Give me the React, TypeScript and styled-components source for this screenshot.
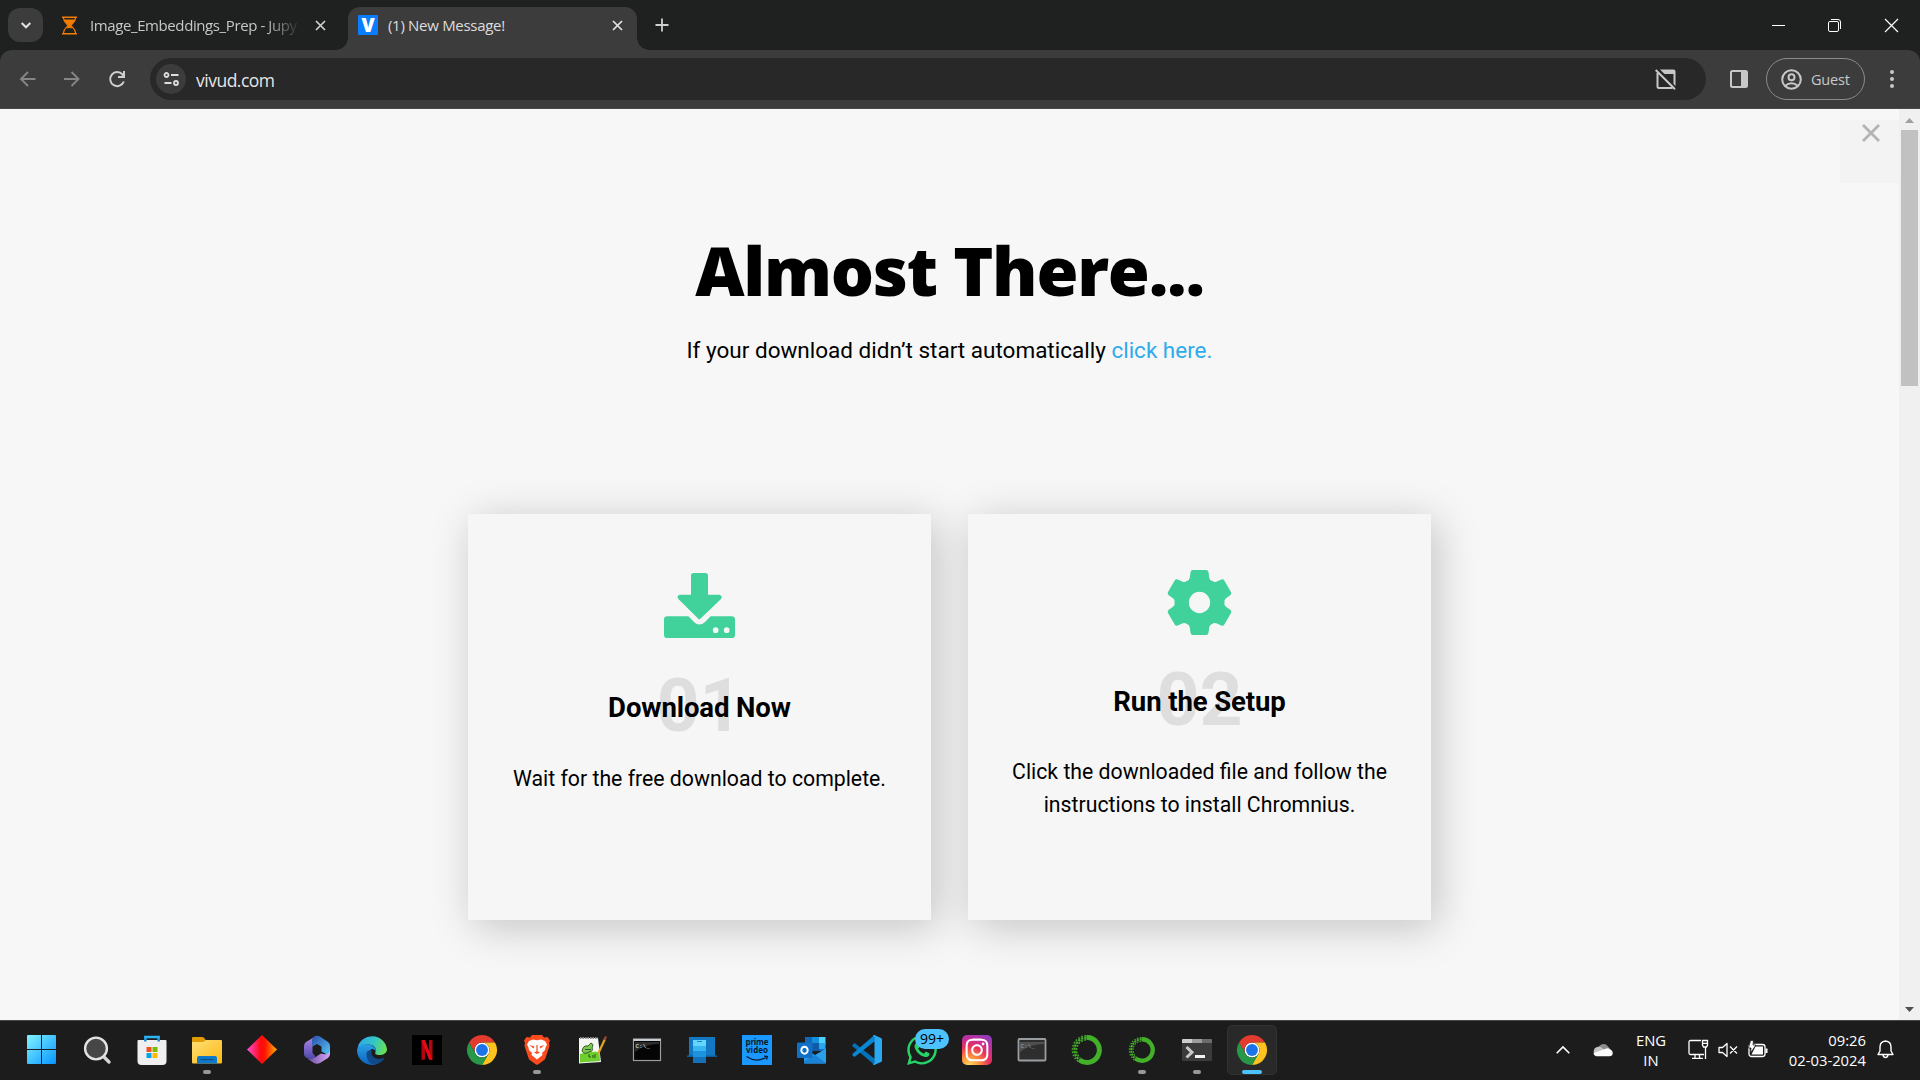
import React from "react";
import styled, { createGlobalStyle } from "styled-components";
import { FaInstagram, FaWhatsapp } from "react-icons/fa";

const UI_FONT = `"Open Sans", "Noto Sans", sans-serif`;
const PAGE_FONT = `Roboto, "Liberation Sans", sans-serif`;

const GlobalStyle = createGlobalStyle`
  *, *::before, *::after { box-sizing: border-box; }
  body { margin: 0; background: #f7f7f7; overflow: hidden; }
  h1, h2, p { margin: 0; }
  svg { display: block; flex: none; overflow: visible; }
`;

const Screen = styled.div`
  width: 1920px;
  height: 1080px;
  display: flex;
  flex-direction: column;
  overflow: hidden;
  font-family: ${UI_FONT};
`;

/* ---------- tab strip ---------- */

const TabStrip = styled.div`
  height: 50px;
  flex: none;
  display: flex;
  align-items: flex-end;
  background: #1f2120;
  color: #dcdcdc;
`;

const TabSearch = styled.div`
  width: 35px;
  height: 34px;
  margin: 0 0 8px 8px;
  border-radius: 12px;
  background: #3c3c3c;
  display: grid;
  place-items: center;
`;

const Tab = styled.div<{ $active?: boolean; $width: number; $left: number; $right: number }>`
  position: relative;
  width: ${(p) => p.$width}px;
  height: ${(p) => (p.$active ? 43 : 50)}px;
  padding: ${(p) => (p.$active ? 0 : 7)}px ${(p) => p.$right}px 7px ${(p) => p.$left}px;
  display: flex;
  align-items: center;
  background: ${(p) => (p.$active ? "#3c3c3c" : "transparent")};
  border-radius: 12px 12px 0 0;
  ${(p) =>
    p.$active &&
    `&::before, &::after {
      content: "";
      position: absolute;
      bottom: 0;
      width: 12px;
      height: 12px;
    }
    &::before {
      left: -12px;
      background: radial-gradient(circle at 0 0, transparent 11.5px, #3c3c3c 12px);
    }
    &::after {
      right: -12px;
      background: radial-gradient(circle at 100% 0, transparent 11.5px, #3c3c3c 12px);
    }`}
`;

const TabTitle = styled.span<{ $fade?: boolean; $gap: number; $track: number }>`
  flex: 1;
  margin-left: ${(p) => p.$gap}px;
  padding-top: 1px;
  font-size: 15px;
  line-height: 21px;
  letter-spacing: ${(p) => p.$track}px;
  white-space: nowrap;
  overflow: hidden;
  ${(p) =>
    p.$fade &&
    `color: #c7c7c7;
     -webkit-mask-image: linear-gradient(90deg, #000 175px, transparent 211px);`}
`;

const TabClose = styled.div<{ $gap: number }>`
  width: 14px;
  margin-left: ${(p) => p.$gap}px;
  display: grid;
  place-items: center;
`;

const NewTab = styled.div`
  width: 14px;
  margin: 0 0 18px 18px;
`;

const WindowControls = styled.div`
  height: 50px;
  margin-left: auto;
  padding-right: 21px;
  display: flex;
  align-items: center;
  gap: 43px;
`;

/* ---------- toolbar ---------- */

const ToolbarBack = styled.div`
  height: 59px;
  flex: none;
  background: #1f2120;
`;

const Toolbar = styled.div`
  height: 59px;
  border-radius: 12px 12px 0 0;
  border-bottom: 1px solid #4a4848;
  background: #3c3c3c;
  display: flex;
  align-items: center;
  padding: 0 20px;
`;

const NavButtons = styled.div`
  display: flex;
  align-items: center;
  gap: 28px;
  width: 130px;
  flex: none;
`;

const Omnibox = styled.div`
  width: 1556px;
  height: 42px;
  flex: none;
  border-radius: 21px;
  background: #282828;
  display: flex;
  align-items: center;
  padding: 0 30px 0 6px;
`;

const SiteInfo = styled.div`
  width: 30px;
  height: 30px;
  border-radius: 50%;
  background: #3c3c3c;
  display: grid;
  place-items: center;
`;

const Address = styled.span`
  flex: 1;
  margin-left: 10px;
  padding-top: 2px;
  font-size: 17.5px;
  line-height: 24px;
  letter-spacing: -0.5px;
  color: #e6e6e6;
`;

const PanelIcon = styled.div`
  margin-left: 24px;
`;

const Profile = styled.div`
  width: 99px;
  height: 42px;
  margin-left: 18px;
  flex: none;
  border: 1px solid #8b8b8b;
  border-radius: 21px;
  display: flex;
  align-items: center;
  gap: 9px;
  padding-left: 14px;
  font-size: 14.5px;
  letter-spacing: -0.2px;
  color: #c9c9c9;
`;

const MenuDots = styled.div`
  margin-left: 25px;
`;

/* ---------- page ---------- */

const Viewport = styled.main`
  height: 911px;
  flex: none;
  display: flex;
  background: #f7f7f7;
`;

const Page = styled.div`
  position: relative;
  width: 1899px;
  height: 911px;
  overflow: hidden;
  font-family: ${PAGE_FONT};
  color: #000;
  display: flex;
  flex-direction: column;
  align-items: center;
`;

const Dismiss = styled.div`
  position: absolute;
  top: 11px;
  right: 0;
  width: 59px;
  height: 63px;
  padding: 4px 0 0 22px;
  background: #f3f3f3;
`;

const Heading = styled.h1`
  margin-top: 116px;
  font-family: "Open Sans", "Noto Sans", sans-serif;
  font-weight: 800;
  font-size: 68px;
  line-height: 90px;
  letter-spacing: -1.25px;
  white-space: nowrap;
`;

const Lead = styled.p`
  margin-top: 18px;
  font-size: 22.5px;
  line-height: 34px;
  white-space: nowrap;
`;

const Link = styled.a`
  color: #2faaea;
`;

const Steps = styled.section`
  isolation: isolate;
  margin-top: 147px;
  display: flex;
  gap: 37px;
`;

const Card = styled.article<{ $top: number }>`
  position: relative;
  width: 463px;
  height: 406px;
  padding-top: ${(p) => p.$top}px;
  background: #f6f6f6;
  display: flex;
  flex-direction: column;
  align-items: center;
  text-align: center;
  &::before {
    content: "";
    position: absolute;
    inset: 0;
    z-index: -1;
    box-shadow: 6px 7px 40px rgba(0, 0, 0, 0.21);
  }
`;

const CardTitle = styled.h2<{ $gap: number }>`
  position: relative;
  z-index: 0;
  margin-top: ${(p) => p.$gap}px;
  font-size: 27.5px;
  font-weight: 700;
  line-height: 34px;
  letter-spacing: -0.1px;
  white-space: nowrap;
`;

const StepNumber = styled.span`
  position: absolute;
  z-index: -1;
  left: 50%;
  top: -23px;
  transform: translateX(-50%);
  font-size: 75px;
  font-weight: 700;
  line-height: 75px;
  letter-spacing: 0;
  color: #dedede;
`;

const CardText = styled.p<{ $gap: number }>`
  margin-top: ${(p) => p.$gap}px;
  width: 400px;
  font-size: 21.25px;
  line-height: 33px;
`;

const ScrollBar = styled.div`
  width: 21px;
  background: #f0f0f0;
  display: flex;
  flex-direction: column;
  align-items: center;
  padding: 9px 0 8px;
`;

const Thumb = styled.div`
  width: 17px;
  height: 256px;
  margin-top: 7px;
  background: #c1c1c1;
`;

const DownArrow = styled.div`
  margin-top: auto;
`;

/* ---------- taskbar ---------- */

const Taskbar = styled.footer`
  height: 60px;
  flex: none;
  border-top: 1px solid #454745;
  background: #1c1c1c;
  color: #fff;
  display: flex;
  padding: 0 0 2px 14px;
`;

const AppCell = styled.div`
  position: relative;
  width: 55px;
  height: 57px;
  display: grid;
  place-items: center;
  &:first-child {
    width: 54px;
    margin-right: 1px;
  }
`;

const AppPlate = styled.div<{ $active?: boolean }>`
  width: 50px;
  height: 50px;
  border-radius: 5px;
  border: 1px solid ${(p) => (p.$active ? "#313131" : "transparent")};
  background: ${(p) => (p.$active ? "#292929" : "transparent")};
  display: grid;
  place-items: center;
`;

const Indicator = styled.i<{ $active?: boolean }>`
  position: absolute;
  bottom: 4px;
  left: 50%;
  width: ${(p) => (p.$active ? 20 : 8)}px;
  height: 4px;
  transform: translateX(-50%);
  border-radius: 2px;
  background: ${(p) => (p.$active ? "#4cc2ff" : "#989898")};
`;

const Badge = styled.span`
  position: absolute;
  left: 21px;
  top: 8px;
  width: 34px;
  height: 20px;
  border-radius: 10px;
  background: #4cc2ff;
  color: #000;
  font-size: 14px;
  line-height: 20px;
  text-align: center;
`;

const InstagramTile = styled.div`
  width: 30px;
  height: 30px;
  border-radius: 5px;
  display: grid;
  place-items: center;
  color: #fff;
  background: radial-gradient(circle at 25% 105%, #ffd35a 5%, #fc8b3c 28%, #e8325d 52%, #c32e9b 72%, #6a45d0 105%);
`;

const Tray = styled.div`
  margin-left: auto;
  display: flex;
  align-items: center;
  padding-right: 26px;
`;

const TraySlot = styled.div<{ $left?: number }>`
  margin-left: ${(p) => p.$left ?? 0}px;
`;

const TrayText = styled.div<{ $width: number; $align: string; $left: number }>`
  width: ${(p) => p.$width}px;
  margin-left: ${(p) => p.$left}px;
  padding-top: 1px;
  font-size: 14.8px;
  line-height: 20px;
  text-align: ${(p) => p.$align};
  white-space: nowrap;
`;

/* ---------- drawings ---------- */

const Cross = ({ size, width, color }: { size: number; width: number; color: string }) => (
  <svg width={size} height={size} viewBox={`0 0 ${size} ${size}`} stroke={color} strokeWidth={width}>
    <path d={`M1 1L${size - 1} ${size - 1}M${size - 1} 1L1 ${size - 1}`} />
  </svg>
);

const Hourglass = () => (
  <svg width="17" height="19" viewBox="0 0 17 19" fill="#f57c00">
    <path d="M1 .5H16V2H1ZM1 17H16V18.500H1Z" />
    <path d="M2.500 2C2.500 6 5.500 7.500 7.200 9.500C5.500 11.500 2.500 13 2.500 17M14.500 2C14.500 6 11.500 7.500 9.800 9.500C11.500 11.500 14.500 13 14.500 17" fill="none" stroke="#f57c00" strokeWidth="1.200" />
    <path d="M3 3.500H14C13.500 7 10.500 7.500 9.500 9.500C10 11 11 11.500 11.500 12.500Q8.500 11.500 5.500 12.500C6 11.500 7 11 7.500 9.500C6.500 7.500 3.500 7 3 3.500Z" />
  </svg>
);

const VFavicon = () => (
  <svg width="20" height="20" viewBox="0 0 20 20">
    <rect width="20" height="20" rx="1" fill="#0a7cff" />
    <text x="10" y="16.800" textAnchor="middle" fontFamily="Open Sans, sans-serif" fontWeight="800" fontSize="19" fill="#fff">V</text>
  </svg>
);

const Arrow = ({ back }: { back?: boolean }) => (
  <svg width="16" height="16" viewBox="0 0 16 16" fill="none" stroke="#858585" strokeWidth="1.900">
    {back ? <path d="M15.500 8H1M8 1L1 8L8 15" /> : <path d="M0 8H14.500M7.500 1L14.500 8L7.500 15" />}
  </svg>
);

const Reload = () => (
  <svg width="18" height="18" viewBox="0 0 18 18" fill="none" stroke="#cfcfcf" strokeWidth="2">
    <path d="M15.800 11.500A7 7 0 1 1 14.500 4.500L16 6.300" />
    <path d="M16 1V7H10" />
  </svg>
);

const Tune = () => (
  <svg width="16" height="14" viewBox="0 0 16 14" fill="none" stroke="#dedede" strokeWidth="1.800">
    <circle cx="3.500" cy="3" r="2" />
    <path d="M8 3H15.500M1.500 11H8.500" />
    <circle cx="13" cy="11" r="2" />
  </svg>
);

const PopupBlocked = () => (
  <svg width="21" height="21" viewBox="0 0 21 21" fill="none" stroke="#c8c8c8" strokeWidth="2">
    <path d="M5 .500H18.500Q20.500 .500 20.500 2.500V17L18.500 15V5H9.500Z" fill="#c8c8c8" stroke="none" />
    <path d="M2.500 4V17.500Q2.500 19 4 19H17.500M.700 1L20 20.300" />
  </svg>
);

const SidePanel = () => (
  <svg width="18" height="18" viewBox="0 0 18 18">
    <rect x="1" y="1" width="16" height="16" rx="1.500" fill="none" stroke="#c8c8c8" strokeWidth="2" />
    <path d="M11 1H17V17H11Z" fill="#c8c8c8" />
  </svg>
);

const Avatar = () => (
  <svg width="21" height="21" viewBox="0 0 21 21" fill="none" stroke="#c8c8c8" strokeWidth="2">
    <circle cx="10.500" cy="10.500" r="9.300" />
    <circle cx="10.500" cy="8.200" r="3" />
    <path d="M4 17Q10.500 11.500 17 17" />
  </svg>
);

const DownloadDrive = () => (
  <svg width="71" height="65" viewBox="0 0 213 195" fill="#41d19b">
    <path d="M89 0H124Q132 0 132 8V65H166Q177 68 171 78L109 137Q106 140 103 137L43 78Q37 68 47 65H81V8Q81 0 89 0Z" />
    <path fillRule="evenodd" d="M10 130H73L90 147Q106 162 123 147L140 130H203Q213 130 213 140V185Q213 195 203 195H10Q0 195 0 185V140Q0 130 10 130ZM155 163A8.500 8.500 0 1 0 155 180A8.500 8.500 0 1 0 155 163ZM188 163A8.500 8.500 0 1 0 188 180A8.500 8.500 0 1 0 188 163Z" />
  </svg>
);

const Gear = () => (
  <svg width="65" height="65" viewBox="-97.500 -97.500 195 195" fill="#41d19b">
    <circle r="53" fill="none" stroke="#41d19b" strokeWidth="42" />
    {[0, 60, 120, 180, 240, 300].map((a) => (
      <path key={a} transform={`rotate(${a})`} d="M-20 -97.500H20Q26 -97.500 27 -91L29 -75Q30 -67 38 -64L28 -45H-28L-38 -64Q-30 -67 -29 -75L-27 -91Q-26 -97.500 -20 -97.500Z" />
    ))}
  </svg>
);

const WindowsLogo = () => (
  <svg width="29" height="29" viewBox="0 0 29 29">
    <defs>
      <linearGradient id="win" x1="0" y1="0" x2="29" y2="29" gradientUnits="userSpaceOnUse">
        <stop stopColor="#81f3ff" />
        <stop offset="1" stopColor="#0695ff" />
      </linearGradient>
    </defs>
    <path fill="url(#win)" d="M0 1Q0 0 1 0H14V14H0ZM15 0H28Q29 0 29 1V14H15ZM0 15H14V29H1Q0 29 0 28ZM15 15H29V28Q29 29 28 29H15Z" />
  </svg>
);

const SearchIcon = () => (
  <svg width="30" height="30" viewBox="0 0 30 30" fill="none" stroke="#e3e3e3">
    <path d="M20.500 20.500L27 27" strokeWidth="3.400" strokeLinecap="round" stroke="#d2d4d6" />
    <circle cx="14" cy="13.500" r="10.900" strokeWidth="2.400" fill="#464646" />
  </svg>
);

const StoreIcon = () => (
  <svg width="30" height="30" viewBox="0 0 30 30">
    <path d="M8.300 6.500V2H21.700V6.500" fill="none" stroke="#2db4f2" strokeWidth="2.400" />
    <path d="M.500 6Q.500 5 1.500 5H28.500Q29.500 5 29.500 6V26Q29.500 30 25.500 30H4.500Q.500 30 .500 26Z" fill="#efefef" />
    <path d="M8.300 3.500V6.500M21.700 3.500V6.500" stroke="#1788cf" strokeWidth="2.400" />
    <path d="M9.500 12H14.500V17H9.500Z" fill="#f25022" />
    <path d="M15.500 12H20.500V17H15.500Z" fill="#7fba00" />
    <path d="M9.500 18H14.500V23H9.500Z" fill="#00a4ef" />
    <path d="M15.500 18H20.500V23H15.500Z" fill="#ffb900" />
  </svg>
);

const FolderIcon = () => (
  <svg width="30" height="30" viewBox="0 0 30 30">
    <defs>
      <linearGradient id="fold" x1="0" y1="0" x2="1" y2="1">
        <stop stopColor="#ffdf76" />
        <stop offset="1" stopColor="#fdb813" />
      </linearGradient>
    </defs>
    <path d="M0 3Q0 2 1 2H10Q12 2 13 4L14 6H29Q30 6 30 7V12H0Z" fill="#e09c05" />
    <path d="M0 7H11L14 5H29Q30 5 30 6V27Q30 28.500 29 28.500H1Q0 28.500 0 27Z" fill="url(#fold)" />
    <path d="M5 28.500V23Q5 21 7 21H23Q25 21 25 23V28.500Z" fill="#0f78c8" />
    <path d="M8.500 24.500H21.500" stroke="#0b4f8c" strokeWidth="1.200" />
  </svg>
);

const DiamondIcon = () => (
  <svg width="30" height="30" viewBox="0 0 30 30">
    <defs>
      <linearGradient id="dia">
        <stop stopColor="#ff4fd8" />
        <stop offset=".45" stopColor="#ff0a12" />
        <stop offset=".6" stopColor="#ff1500" />
        <stop offset="1" stopColor="#ffb000" />
      </linearGradient>
    </defs>
    <path d="M15 0L30 14.500L15 29L0 14.500Z" fill="url(#dia)" />
  </svg>
);

const M365Icon = () => (
  <svg width="30" height="30" viewBox="0 0 30 30">
    <defs>
      <linearGradient id="m1" x1="0" y1="0" x2="0" y2="1">
        <stop stopColor="#b08be8" />
        <stop offset="1" stopColor="#4a43a8" />
      </linearGradient>
      <linearGradient id="m2" x1="0" y1="0" x2="1" y2="1">
        <stop stopColor="#2a4fa8" />
        <stop offset="1" stopColor="#56c6fb" />
      </linearGradient>
      <linearGradient id="m3">
        <stop stopColor="#6b4d9e" />
        <stop offset="1" stopColor="#d7a6f5" />
      </linearGradient>
    </defs>
    <path d="M14 1L4 7Q2 8.500 2 11V19Q2 21.500 4 22.500L9 25Q13 25 13 21L10.500 18V11.500L14 9Z" fill="url(#m1)" />
    <path d="M12 1.500Q15 0 18 1.500L26 7Q28 8.500 28 11V18Q28 21 25 19.500L19.500 16.500V11.500L15 9L10 11.500V5Q10 3 12 1.500Z" fill="url(#m2)" />
    <path d="M28 16V19Q28 21.500 26 23L18 28Q15 29.500 12 28L5 23.500Q9 25 12 23L19 18.500Q26 21 28 16Z" fill="url(#m3)" />
  </svg>
);

const EdgeIcon = () => (
  <svg width="30" height="30" viewBox="0 0 30 30">
    <defs>
      <linearGradient id="e1" x1="0" y1=".3" x2="1" y2=".5">
        <stop stopColor="#2fa8e8" />
        <stop offset=".55" stopColor="#32c7c4" />
        <stop offset="1" stopColor="#6be052" />
      </linearGradient>
      <linearGradient id="e2" x1="0" y1="0" x2="0" y2="1">
        <stop stopColor="#2aa0e6" />
        <stop offset="1" stopColor="#0c63bd" />
      </linearGradient>
    </defs>
    <path d="M.500 13A15 15 0 0 1 30 14C30 18 26.500 20 22.500 20C19 20 17.500 18.800 18.500 17C20 13 16 9.500 11.500 9.500C6 9.500 2 11.500 .500 13Z" fill="url(#e1)" />
    <path d="M0 15C1 10 6 8.500 11 9.500C16 10 19.500 13 18.500 17C17 12 12 14 12 19C12 24 17 28 22 27.500C19 29.500 17 30 15 30A15 15 0 0 1 0 15Z" fill="url(#e2)" />
    <path d="M9.500 18C9 24 13 30 18 29.700C22.500 28.500 26 26 28 22.500C23 25 18 24 15.500 21C14 19 14 17 15 15.500C12 15 10 16 9.500 18Z" fill="#114a8b" />
  </svg>
);

const NetflixIcon = () => (
  <svg width="30" height="30" viewBox="0 0 30 30">
    <rect width="30" height="30" fill="#000" />
    <path d="M9.500 5H13V24.500L9.500 25Z M17 5H20.500V25L17 24.500Z" fill="#b1060f" />
    <path d="M9.500 5H13L20.500 25L17 24.500Z" fill="#e50914" />
  </svg>
);

const ChromeIcon = () => (
  <svg width="30" height="30" viewBox="0 0 48 48">
    <circle cx="24" cy="24" r="12" fill="#fff" />
    <path fill="#e33b2e" d="M24 12H44.781a23.994 23.994 0 0 0-41.564.003L13.608 30l.009-.002A11.985 11.985 0 0 1 24 12Z" />
    <circle cx="24" cy="24" r="9.500" fill="#1a73e8" />
    <path fill="#fcc31e" d="M34.391 30.003 24.001 48A23.994 23.994 0 0 0 44.780 12.003H23.999l-.003.009A11.985 11.985 0 0 1 34.391 30.003Z" />
    <path fill="#279847" d="M13.609 30.003 3.218 12.006A23.994 23.994 0 0 0 24.003 48L34.393 30.003l-.007-.007a11.985 11.985 0 0 1-20.778.007Z" />
  </svg>
);

const BraveIcon = () => (
  <svg width="26" height="30" viewBox="0 0 26 30">
    <path d="M8 0H18L20 2.500L23.500 2L26 5.500L25 8L25.500 11L21.500 23Q21 24.500 19.500 25.500L14 29.500Q13 30 12 29.500L6.500 25.500Q5 24.500 4.500 23L.500 11L1 8L0 5.500L2.500 2L6 2.500Z" fill="#fb4b1e" />
    <path d="M9 4.500L13 5.300L17 4.500L21 6L23 9.500L21.500 12.500L21 15L18 18L18.500 20L13 24.500L7.500 20L8 18L5 15L4.500 12.500L3 9.500L5 6Z" fill="#fff" />
    <path d="M5.500 10L10.500 11.500L9.500 13.500ZM20.500 10L15.500 11.500L16.500 13.500ZM10 17.500L13 16L16 17.500L13 19Z M12.400 10H13.600V17H12.400Z" fill="#fb4b1e" />
  </svg>
);

const NotepadIcon = () => (
  <svg width="30" height="30" viewBox="0 0 30 30">
    <path d="M2 3H21L24 27L2 28.500Z" fill="#f4f6f2" />
    <path d="M3 19Q12 16 22.500 17L23 26L3 27.500Z" fill="#6fcf2f" />
    <path d="M3 3H21" stroke="#8b8b8b" strokeWidth="2" strokeDasharray="1.500 1" />
    <path d="M5 16Q6 10 11 11L14 8Q17 9 15 13Q17 16 12 17Q7 20 5 16ZM8 14.500H14" fill="#7cc94f" stroke="#284d1b" strokeWidth=".9" />
    <path d="M12 19V22H14M16 20V23M18 19V23" stroke="#1d4a12" strokeWidth=".9" fill="none" />
    <path d="M21 19L28 4" stroke="#e3a51f" strokeWidth="2.200" />
    <path d="M27.400 5L29 1.500" stroke="#a5462c" strokeWidth="2.200" />
  </svg>
);

const CmdIcon = ({ boxed }: { boxed?: boolean }) => (
  <svg width="30" height="30" viewBox="0 0 30 30">
    <rect x="1.500" y="4" width="27" height="21.500" rx={boxed ? 1 : 0} fill={boxed ? "#2e2e2e" : "#050505"} stroke="#9a9da0" strokeWidth={boxed ? 1.8 : 1.2} />
    {!boxed && <path d="M1.500 4H28.500V6H1.500Z" fill="#c9ccd0" />}
    <path d="M3 7H27V9Q13 9 3 17Z" fill="#ffffff" opacity=".16" />
    <text x="3.500" y="12.500" fontFamily="Liberation Mono, monospace" fontSize="6" fill={boxed ? "#a6a6a6" : "#e8e8e8"}>{"C:\\_"}</text>
  </svg>
);

const PhoneLinkIcon = () => (
  <svg width="30" height="30" viewBox="0 0 30 30">
    <path d="M2 2H28V20L30 22H0L2 20Z" fill="#1378c4" />
    <path d="M0 20.500H30V22H0Z" fill="#0e5b9c" />
    <path d="M6 5H19V28H6Z" fill="#1470b9" />
    <path d="M6 5H19V11H6Z" fill="#62d7fb" />
    <path d="M6 11H19V16H6Z" fill="#38b6f0" />
    <path d="M6 16H19V22H6Z" fill="#1d93dd" />
    <path d="M10 6.500H15" stroke="#1573ad" strokeWidth=".8" />
  </svg>
);

const PrimeIcon = () => (
  <svg width="30" height="30" viewBox="0 0 30 30" fontFamily="Open Sans, sans-serif" fontWeight="700" fontSize="8">
    <rect width="30" height="30" fill="#1a98ff" />
    <text x="3.500" y="9.500" textLength="23" fill="#06182b">prime</text>
    <text x="4" y="18.300" textLength="22" fill="#06182b">video</text>
    <path d="M4.500 21.500Q14 28 24 22.500M22 21.200L25.500 21.500L24.500 24.500" fill="none" stroke="#06182b" strokeWidth="1.200" />
  </svg>
);

const OutlookIcon = () => (
  <svg width="30" height="30" viewBox="0 0 30 30">
    <path d="M8 2H28V16H8Z" fill="#1567b8" />
    <path d="M15 2H22V12H15Z" fill="#1490df" />
    <path d="M22 2H28.500V10H22Z" fill="#4fd0fb" />
    <path d="M15 8H22V16H15Z" fill="#0f5ba5" />
    <path d="M22 8H28.500V14H22Z" fill="#2aa7ee" />
    <path d="M7 14L18 20L29 13.500V27.500Q29 28.500 28 28.500H8Q7 28.500 7 27.500Z" fill="#2a9fea" />
    <path d="M18 20L29 28Q28.500 28.500 28 28.500H8Q7 28.500 7 27.500V26Z" fill="#1a83d6" />
    <rect x="0" y="7.500" width="15.500" height="15.500" rx="1" fill="#0f70c5" />
    <ellipse cx="7.500" cy="15.200" rx="3.200" ry="3.500" fill="none" stroke="#fff" strokeWidth="1.900" />
  </svg>
);

const CodeIcon = () => (
  <svg width="30" height="30" viewBox="0 0 30 30">
    <path d="M1.800 8.500Q2.500 8 3.200 8.500L23 24L22.500 30L.600 11.200Q0 10.500 .600 9.800Z" fill="#0072ba" />
    <path d="M1.800 21.500Q2.500 22 3.200 21.500L23 6L22.500 0L.600 18.800Q0 19.500 .600 20.200Z" fill="#0a87d2" />
    <path d="M22.300 0L29 3Q30 3.500 30 4.500V25.500Q30 26.500 29 27L22.300 30Q21 30 21 29L22.500 28V2L21 1Q21 0 22.300 0Z" fill="#2aa8f2" />
  </svg>
);

const AnacondaIcon = ({ size }: { size: number }) => (
  <svg width={size} height={size} viewBox="0 0 30 30" fill="none" stroke="#43b02a">
    <path d="M14.500 2.600A12.400 12.400 0 1 1 7.500 24.900" strokeWidth="5" />
    <path d="M14.500 2.600A12.400 12.400 0 0 0 8 25.300" strokeWidth="2.200" strokeDasharray="2.400 .9" />
    <path d="M14 .700A14.300 14.300 0 0 0 7 27" strokeWidth="1.500" strokeDasharray="1.700 1.600" />
    <path d="M14 4.700A10.400 10.400 0 0 0 8.500 23.200" strokeWidth="1.400" strokeDasharray="2 1.300" />
  </svg>
);

const TerminalIcon = () => (
  <svg width="30" height="30" viewBox="0 0 30 30">
    <rect y="4" width="30" height="22" rx="1" fill="#3b3b3b" />
    <path d="M0 8V5Q0 4 1 4H10V8Z" fill="#cdcdcd" />
    <path d="M10 4H20V8H10Z" fill="#9d9d9d" />
    <path d="M20 4H29Q30 4 30 5V8H20Z" fill="#6c6c6c" />
    <path d="M4.500 12L10 17.300L4.500 22.500" fill="none" stroke="#c9c9c9" strokeWidth="3" />
    <path d="M13 20H23V23H13Z" fill="#f2f2f2" />
  </svg>
);

const Cloud = () => (
  <svg width="20" height="14" viewBox="0 0 20 14">
    <path d="M5 6A5.500 5.500 0 0 1 15 3.500L19 8L9 9Z" fill="#8d8d8d" />
    <path d="M3 12A4.300 4.300 0 0 1 4 4Q7 3 9 5L14 9Z" fill="#c4c4c4" />
    <path d="M3 13.300Q.500 12.500 .500 10L12 6Q15 4.500 17 6.500Q20 7.500 19.700 10.500Q19.500 13.300 16.500 13.300Z" fill="#fafafa" />
  </svg>
);

const Monitor = () => (
  <svg width="21" height="21" viewBox="0 0 21 21" fill="none" stroke="#fff" strokeWidth="1.300">
    <path d="M13 1.500H2.500Q1 1.500 1 3V14Q1 15.500 2.500 15.500H16M7 16V19M11.500 16V19M4 19.300H15" />
    <path d="M14.500 1.500H19.500V6L18.500 8H15.500L14.500 6ZM14.500 4.300H19.500M17.500 8V20" />
  </svg>
);

const Muted = () => (
  <svg width="20" height="16" viewBox="0 0 20 16" fill="none" stroke="#fff" strokeWidth="1.300">
    <path d="M1 5.500H4.500L9 1.500V14.500L4.500 10.500H1ZM12 4.500L19 11.500M19 4.500L12 11.500" strokeLinejoin="round" />
  </svg>
);

const Battery = () => (
  <svg width="20" height="18" viewBox="0 0 20 18">
    <rect x="1" y="3.500" width="16" height="12" rx="2.500" fill="none" stroke="#fff" strokeWidth="1.300" />
    <path d="M3.500 13.500L7.500 5.500H15V13.500Z" fill="#fff" />
    <path d="M17.500 7.500H19.500V12H17.500Z" fill="#fff" />
    <path d="M2.500 -.500H5.500L5 4H8L2.500 12L3 7H.500Z" fill="#fff" stroke="#1c1c1c" strokeWidth=".8" />
  </svg>
);

const Bell = () => (
  <svg width="17" height="19" viewBox="0 0 17 19" fill="none" stroke="#fff" strokeWidth="1.400">
    <path d="M8.500 1Q3 1.500 3 7V11L1 14.500H16L14 11V7Q14 1.500 8.500 1ZM6 15Q6.500 17.500 8.500 17.500Q10.500 17.500 11 15" strokeLinejoin="round" />
  </svg>
);

type App = { icon: React.ReactNode; running?: boolean; active?: boolean; badge?: string };

const apps: App[] = [
  { icon: <WindowsLogo /> },
  { icon: <SearchIcon /> },
  { icon: <StoreIcon /> },
  { icon: <FolderIcon />, running: true },
  { icon: <DiamondIcon /> },
  { icon: <M365Icon /> },
  { icon: <EdgeIcon /> },
  { icon: <NetflixIcon /> },
  { icon: <ChromeIcon /> },
  { icon: <BraveIcon />, running: true },
  { icon: <NotepadIcon /> },
  { icon: <CmdIcon /> },
  { icon: <PhoneLinkIcon /> },
  { icon: <PrimeIcon /> },
  { icon: <OutlookIcon /> },
  { icon: <CodeIcon /> },
  { icon: <FaWhatsapp size={34} color="#25d366" />, badge: "99+" },
  { icon: <InstagramTile><FaInstagram size={26} /></InstagramTile> },
  { icon: <CmdIcon boxed /> },
  { icon: <AnacondaIcon size={30} /> },
  { icon: <AnacondaIcon size={26} />, running: true },
  { icon: <TerminalIcon />, running: true },
  { icon: <ChromeIcon />, running: true, active: true },
];

export default function App() {
  return (
    <Screen>
      <GlobalStyle />
      <TabStrip>
        <TabSearch>
          <svg width="10" height="7" viewBox="0 0 10 7" fill="none" stroke="#e3e3e3" strokeWidth="2">
            <path d="M.700 1L5 5.300L9.300 1" />
          </svg>
        </TabSearch>
        <Tab $width={305} $left={18} $right={21}>
          <Hourglass />
          <TabTitle $fade $gap={12} $track={-0.4}>Image_Embeddings_Prep - Jupy</TabTitle>
          <TabClose $gap={6}><Cross size={11} width={1.7} color="#d0d0d0" /></TabClose>
        </Tab>
        <Tab $active $width={289} $left={10} $right={13}>
          <VFavicon />
          <TabTitle $gap={10} $track={-0.3}>(1) New Message!</TabTitle>
          <TabClose $gap={8}><Cross size={11} width={1.7} color="#e3e3e3" /></TabClose>
        </Tab>
        <NewTab>
          <svg width="14" height="14" viewBox="0 0 14 14" stroke="#cfcfcf" strokeWidth="1.800">
            <path d="M7 .500V13.500M.500 7H13.500" />
          </svg>
        </NewTab>
        <WindowControls>
          <svg width="13" height="13" viewBox="0 0 13 13" stroke="#fff"><path d="M0 6.500H13" /></svg>
          <svg width="13" height="13" viewBox="0 0 13 13" stroke="#fff" fill="none">
            <rect x=".5" y="2.500" width="10" height="10" rx="1.500" />
            <path d="M3 .500H10Q12.500 .500 12.500 3V10" />
          </svg>
          <Cross size={15} width={1.2} color="#fff" />
        </WindowControls>
      </TabStrip>

      <ToolbarBack>
        <Toolbar>
          <NavButtons>
            <Arrow back />
            <Arrow />
            <Reload />
          </NavButtons>
          <Omnibox>
            <SiteInfo><Tune /></SiteInfo>
            <Address>vivud.com</Address>
            <PopupBlocked />
          </Omnibox>
          <PanelIcon><SidePanel /></PanelIcon>
          <Profile><Avatar />Guest</Profile>
          <MenuDots>
            <svg width="4" height="18" viewBox="0 0 4 18" fill="#c8c8c8">
              <circle cx="2" cy="2" r="2" /><circle cx="2" cy="9" r="2" /><circle cx="2" cy="16" r="2" />
            </svg>
          </MenuDots>
        </Toolbar>
      </ToolbarBack>

      <Viewport>
        <Page>
          <Dismiss><Cross size={18} width={2.8} color="#b3b3b3" /></Dismiss>
          <Heading>Almost There...</Heading>
          <Lead>If your download didn’t start automatically <Link>click here.</Link></Lead>
          <Steps>
            <Card $top={59}>
              <DownloadDrive />
              <CardTitle $gap={53}>Download Now<StepNumber>01</StepNumber></CardTitle>
              <CardText $gap={37}>Wait for the free download to complete.</CardText>
            </Card>
            <Card $top={56}>
              <Gear />
              <CardTitle $gap={50}>Run the Setup<StepNumber>02</StepNumber></CardTitle>
              <CardText $gap={36}>Click the downloaded file and follow the instructions to install Chromnius.</CardText>
            </Card>
          </Steps>
        </Page>
        <ScrollBar>
          <svg width="9" height="5" viewBox="0 0 9 5" fill="#a0a0a0"><path d="M0 5L4.500 0L9 5Z" /></svg>
          <Thumb />
          <DownArrow>
            <svg width="9" height="5" viewBox="0 0 9 5" fill="#505050"><path d="M0 0L4.500 5L9 0Z" /></svg>
          </DownArrow>
        </ScrollBar>
      </Viewport>

      <Taskbar>
        {apps.map((app, i) => (
          <AppCell key={i}>
            <AppPlate $active={app.active}>{app.icon}</AppPlate>
            {app.badge && <Badge>{app.badge}</Badge>}
            {app.running && <Indicator $active={app.active} />}
          </AppCell>
        ))}
        <Tray>
          <TraySlot>
            <svg width="14" height="8" viewBox="0 0 14 8" fill="none" stroke="#fff" strokeWidth="1.600"><path d="M.700 7.300L7 1L13.300 7.300" /></svg>
          </TraySlot>
          <TraySlot $left={23}><Cloud /></TraySlot>
          <TrayText $width={40} $align="center" $left={18}>ENG<br />IN</TrayText>
          <TraySlot $left={17}><Monitor /></TraySlot>
          <TraySlot $left={9}><Muted /></TraySlot>
          <TraySlot $left={10}><Battery /></TraySlot>
          <TrayText $width={90} $align="right" $left={8}>09:26<br />02-03-2024</TrayText>
          <TraySlot $left={11}><Bell /></TraySlot>
        </Tray>
      </Taskbar>
    </Screen>
  );
}
